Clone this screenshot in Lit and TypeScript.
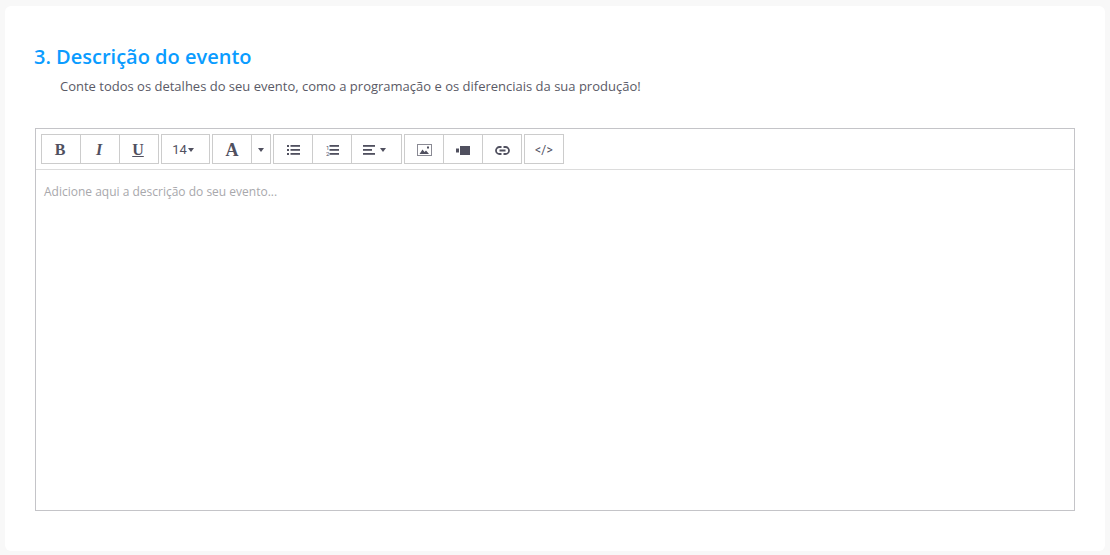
import { LitElement, html, css, svg } from "lit";
import { customElement } from "lit/decorators.js";

const ink = "#50505f";

@customElement("app-root")
export class AppRoot extends LitElement {
  static styles = css`
    :host { display: block; width: 1110px; height: 555px; background: #f8f8f8; font-family: "Open Sans", sans-serif; overflow: hidden; }
    .card { box-sizing: border-box; margin: 6px 5px 0; height: 545px; background: #fff; border-radius: 6px; padding: 37px 30px 0; }
    .card::before { content: ""; display: table; }
    h2 { margin: 0 0 0 -1px; font-size: 20px; line-height: 27px; font-weight: 600; color: #0a9cff; }
    p { margin: 7px 0 0 25px; font-size: 13px; line-height: 19px; color: #5a5a66; }
    .editor { box-sizing: border-box; margin-top: 32px; height: 383px; border: 1px solid #c4c4c8; }
    .toolbar { box-sizing: border-box; height: 41px; border-bottom: 1px solid #dcdcdc; padding: 5px 0 0 5px; display: flex; gap: 2px; }
    .group { display: flex; height: 30px; border: 1px solid #ccc; box-sizing: border-box; }
    .btn { box-sizing: border-box; width: 39px; height: 28px; padding-top: 2px; display: flex; align-items: center; justify-content: center; border-left: 1px solid #ccc; color: #50505f; font-size: 12px; }
    .btn:first-child { border-left: 0; width: 38px; }
    .serif { font-family: "Liberation Serif", serif; font-size: 16px; font-weight: 700; padding-right: 2px; }
    .i { font-style: italic; }
    .u { text-decoration: underline; }
    .a { font-size: 18px; padding-right: 0; }
    .num { width: 47px !important; gap: 1px; padding-right: 5px; padding-bottom: 1px; font-family: Roboto, sans-serif; font-size: 13px; }
    .caret { width: 19px !important; }
    .align { width: 50px !important; gap: 5px; padding-right: 5px; }
    .code { width: 38px !important; font-family: Roboto, sans-serif; font-size: 12px; letter-spacing: .3px; }
    .color { width: 38px !important; }
    .body { padding: 13px 8px; font-size: 12px; line-height: 18px; color: #a8a8ac; }
    svg { display: block; }
  `;

  private tri() {
    return html`<svg width="6" height="4" viewBox="0 0 6 4"><path d="M0 0h6L3 4z" fill="${ink}"/></svg>`;
  }

  private lines(kind: "ul" | "ol") {
    const xs = kind === "ul" ? svg`<rect x="0" y="1" width="2" height="2"/><rect x="0" y="5" width="2" height="2"/><rect x="0" y="9" width="2" height="2"/>`
      : svg`<text x="0" y="5.500" font-size="6" font-family="Roboto">1</text><text x="0" y="12" font-size="6" font-family="Roboto">2</text>`;
    return html`<svg width="13" height="12" viewBox="0 0 13 12" fill="${ink}">${xs}<rect x="3.5" y="1" width="9.5" height="1.8"/><rect x="3.5" y="5" width="9.5" height="1.8"/><rect x="3.5" y="9" width="9.5" height="1.8"/></svg>`;
  }

  render() {
    return html`<div class="card">
      <h2>3. Descrição do evento</h2>
      <p>Conte todos os detalhes do seu evento, como a programação e os diferenciais da sua produção!</p>
      <div class="editor">
        <div class="toolbar">
          <div class="group">
            <div class="btn serif">B</div><div class="btn serif i">I</div><div class="btn serif u">U</div>
          </div>
          <div class="group"><div class="btn num">14${this.tri()}</div></div>
          <div class="group">
            <div class="btn serif a color">A</div><div class="btn caret">${this.tri()}</div>
          </div>
          <div class="group">
            <div class="btn">${this.lines("ul")}</div>
            <div class="btn">${this.lines("ol")}</div>
            <div class="btn align">
              <svg width="12" height="10" viewBox="0 0 12 10" fill="${ink}"><rect y="0" width="12" height="1.8"/><rect y="4" width="9" height="1.8"/><rect y="8" width="12" height="1.8"/></svg>
              ${this.tri()}
            </div>
          </div>
          <div class="group">
            <div class="btn"><svg width="15" height="12" viewBox="0 0 15 12"><rect x=".5" y=".5" width="14" height="11" fill="none" stroke="#8a8a94"/><path d="M2.500 10l3-4.500 2 2.500 1.500-1.500 3 3.500z" fill="${ink}"/><rect x="10" y="2.500" width="2" height="2" fill="${ink}"/></svg></div>
            <div class="btn"><svg width="14" height="9" viewBox="0 0 14 9" fill="${ink}"><rect x="4" y="0" width="10" height="9"/><path d="M0 2.500h3v4H0z"/></svg></div>
            <div class="btn"><svg width="15" height="9" viewBox="0 0 15 9" fill="none" stroke="${ink}" stroke-width="1.800"><path d="M6.500 1H4.500a3.500 3.500 0 0 0 0 7h2M8.500 1h2a3.500 3.500 0 0 1 0 7h-2M4.500 4.500h6"/></svg></div>
          </div>
          <div class="group"><div class="btn code">&lt;/&gt;</div></div>
        </div>
        <div class="body">Adicione aqui a descrição do seu evento...</div>
      </div>
    </div>`;
  }
}
